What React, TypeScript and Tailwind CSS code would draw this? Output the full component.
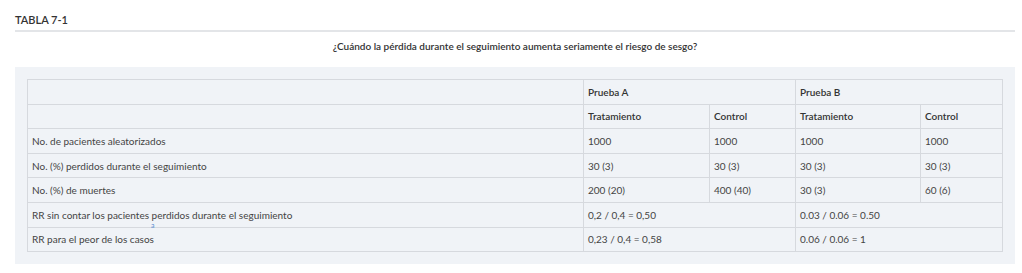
const rows = [
  { label: 'No. de pacientes aleatorizados', cells: ['1000', '1000', '1000', '1000'] },
  { label: 'No. (%) perdidos durante el seguimiento', cells: ['30 (3)', '30 (3)', '30 (3)', '30 (3)'] },
  { label: 'No. (%) de muertes', cells: ['200 (20)', '400 (40)', '30 (3)', '60 (6)'] },
]

const td = 'border border-[#d6d9de] px-[4px] align-middle'

export default function App() {
  return (
    <div className="min-h-[273px] bg-white pl-[15px] pr-[7px] pt-[13px] text-[10px] text-[#444] [font-family:Lato,'Liberation_Sans',sans-serif]">
      <div className="border-b-2 border-[#e3e5e8] pb-[4px] text-[11px] font-semibold leading-[13px] text-[#333]">
        TABLA 7-1
      </div>
      <div className="pt-[7px] pb-[14px] text-center text-[10px] font-semibold leading-[14px] text-[#333]">
        ¿Cuándo la pérdida durante el seguimiento aumenta seriamente el riesgo de sesgo?
      </div>
      <div className="bg-[#f0f3f7] px-[12px] py-[12px]">
        <table className="w-full border-collapse leading-[14px]">
          <colgroup>
            <col className="w-[556px]" />
            <col className="w-[126px]" />
            <col className="w-[86px]" />
            <col className="w-[125px]" />
            <col />
          </colgroup>
          <tbody>
            <tr className="h-[24.6px] font-semibold text-[#333]">
              <td className={td}></td>
              <td className={td} colSpan={2}>Prueba A</td>
              <td className={td} colSpan={2}>Prueba B</td>
            </tr>
            <tr className="h-[24.6px] font-semibold text-[#333]">
              <td className={td}></td>
              <td className={td}>Tratamiento</td>
              <td className={td}>Control</td>
              <td className={td}>Tratamiento</td>
              <td className={td}>Control</td>
            </tr>
            {rows.map(r => (
              <tr key={r.label} className="h-[24.6px]">
                <td className={td}>{r.label}</td>
                {r.cells.map((c, i) => (
                  <td key={i} className={td}>{c}</td>
                ))}
              </tr>
            ))}
            <tr className="h-[24.6px]">
              <td className={td}>
                <div className="relative">
                  RR sin contar los pacientes perdidos durante el seguimiento
                  <span className="absolute left-[119px] top-[13px] text-[7px] leading-[8px] text-[#5b8fd0]">a</span>
                </div>
              </td>
              <td className={td} colSpan={2}>0,2 / 0,4 = 0,50</td>
              <td className={td} colSpan={2}>0.03 / 0.06 = 0.50</td>
            </tr>
            <tr className="h-[24.6px]">
              <td className={td}>RR para el peor de los casos</td>
              <td className={td} colSpan={2}>0,23 / 0,4 = 0,58</td>
              <td className={td} colSpan={2}>0.06 / 0.06 = 1</td>
            </tr>
          </tbody>
        </table>
      </div>
    </div>
  )
}
